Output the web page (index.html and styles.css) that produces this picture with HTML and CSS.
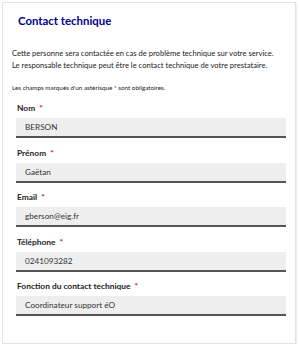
FILE: index.html
```html
<!doctype html>
<html lang="fr">
<head>
  <meta charset="UTF-8">
  <title>Contact technique</title>
  <link rel="stylesheet" href="styles.css">
</head>
<body>
<section class="card">
  <h2 class="card-title">Contact technique</h2>
  <p class="intro">Cette personne sera contactée en cas de problème technique sur votre service.<br>
  Le responsable technique peut être le contact technique de votre prestataire.</p>
  <p class="note">Les champs marqués d'un astérisque * sont obligatoires.</p>

  <div class="field">
    <label class="label" for="nom">Nom <span class="req">*</span></label>
    <input class="input" id="nom" type="text" value="BERSON">
  </div>
  <div class="field">
    <label class="label" for="prenom">Prénom <span class="req">*</span></label>
    <input class="input" id="prenom" type="text" value="Gaëtan">
  </div>
  <div class="field">
    <label class="label" for="email">Email <span class="req">*</span></label>
    <input class="input" id="email" type="text" value="gberson@eig.fr">
  </div>
  <div class="field">
    <label class="label" for="tel">Téléphone <span class="req">*</span></label>
    <input class="input" id="tel" type="text" value="0241093282">
  </div>
  <div class="field">
    <label class="label" for="fonction">Fonction du contact technique <span class="req">*</span></label>
    <input class="input" id="fonction" type="text" value="Coordinateur support éO">
  </div>
</section>
</body>
</html>
```

FILE: styles.css
```css
body {
  margin: 0;
  background: #fff;
  font-family: Lato, "Open Sans", sans-serif;
  color: #1e1e1e;
}

.card {
  box-sizing: border-box;
  width: 294px;
  height: 342px;
  margin: 2px 0 0 2px;
  padding: 11px 10px 0 9px;
  border: 1px solid #e3e3e3;
  box-shadow: 1px 1px 1px rgba(0, 0, 0, 0.06);
}

.card-title {
  margin: 0 0 19px 6px;
  font-size: 11.4px;
  line-height: 14px;
  font-weight: 700;
  color: #000091;
}

.intro {
  margin: 0;
  font-size: 7.6px;
  line-height: 12px;
  color: #222;
}

.note {
  margin: 12px 0 9px;
  font-size: 6.3px;
  line-height: 10px;
  color: #222;
}

.req {
  margin-left: 2px;
  color: #e1000f;
}

.field {
  margin-left: 4px;
  margin-bottom: 8.5px;
}

.label {
  display: block;
  margin: 0 0 4px 1px;
  font-size: 8.4px;
  line-height: 12px;
  font-weight: 700;
  color: #222;
}

.input {
  display: block;
  box-sizing: border-box;
  width: 270px;
  height: 20px;
  margin: 0;
  padding: 0 9px;
  border: 0;
  border-bottom: 2px solid #555;
  border-radius: 0;
  background: #eee;
  font-family: inherit;
  font-size: 8.2px;
  color: #333;
}
```
